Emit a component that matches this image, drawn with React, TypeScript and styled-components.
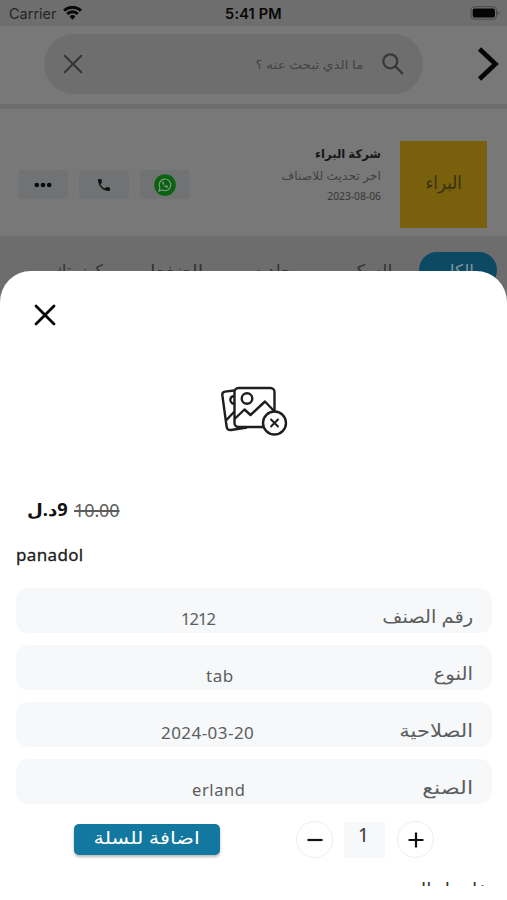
import React from 'react';
import styled, { createGlobalStyle } from 'styled-components';

const Global = createGlobalStyle`
  * { box-sizing: border-box; }
  body { margin: 0; background: #fff; }
`;

const Screen = styled.div`
  position: relative;
  width: 507px;
  height: 900px;
  overflow: hidden;
  background: #707070;
  font-family: 'Noto Sans', 'DejaVu Sans', sans-serif;
`;

const Label = styled.span<{ $size: number; $color?: string; $weight?: number; $stretch?: number; $origin?: string; $track?: number }>`
  display: inline-block;
  white-space: nowrap;
  font-size: ${p => p.$size}px;
  font-weight: ${p => p.$weight ?? 400};
  color: ${p => p.$color ?? '#5c5d5f'};
  letter-spacing: ${p => p.$track ?? 0}px;
  transform: scaleX(${p => p.$stretch ?? 1});
  transform-origin: ${p => p.$origin ?? 'right'} center;
`;

const StatusBar = styled.header`
  display: grid;
  grid-template-columns: 1fr auto 1fr;
  align-items: center;
  height: 26px;
  padding: 2px 7px 0 9px;
  background: #6e6e6e;
  color: #060606;
  font: 600 14.5px/24px Inter, sans-serif;
`;

const Time = styled.span`
  margin-left: -2px;
  letter-spacing: 0.2px;
`;

const Carrier = styled.div`
  display: flex;
  align-items: center;
  gap: 6px;
  font-weight: 400;
  font-size: 14.5px;
  color: #252525;
`;

const Battery = styled.svg`
  justify-self: end;
  margin-top: -2px;
`;

const SearchHeader = styled.div`
  display: flex;
  align-items: center;
  height: 78px;
  padding: 0 8px 2px 44px;
  justify-content: space-between;
  background: #787878;
`;

const SearchBox = styled.div`
  display: flex;
  align-items: center;
  width: 379px;
  height: 60px;
  padding: 0 18px;
  border-radius: 30px;
  background: #6e6e6e;
`;

const SearchHint = styled.div`
  flex: 1;
  display: flex;
  justify-content: flex-end;
  padding-right: 18px;
`;

const Company = styled.section`
  display: flex;
  align-items: flex-start;
  height: 132px;
  padding: 32px 20px 0 18px;
  border-top: 5px solid #6c6c6c;
  background: #787878;
`;

const Contacts = styled.div`
  display: flex;
  gap: 11px;
  padding-top: 29px;
`;

const ContactButton = styled.button`
  display: grid;
  place-items: center;
  width: 50px;
  height: 29px;
  padding: 0;
  border: 0;
  border-radius: 5px;
  background: #707274;
`;

const CompanyInfo = styled.div`
  flex: 1;
  display: flex;
  flex-direction: column;
  align-items: flex-end;
  padding: 2px 19px 0 0;
  line-height: 21.5px;
`;

const Logo = styled.div`
  display: grid;
  place-items: center;
  width: 87px;
  height: 87px;
  padding-bottom: 6px;
  background: #79600d;
`;

const Tabs = styled.nav`
  display: flex;
  direction: rtl;
  height: 60px;
  padding: 16px 10px 0;
  background: #6d6d6d;
`;

const Tab = styled.div<{ $width: number; $active?: boolean }>`
  display: flex;
  justify-content: center;
  width: ${p => p.$width}px;
  height: 36px;
  border-radius: 18px;
  line-height: 36px;
  background: ${p => (p.$active ? '#0b4a62' : 'transparent')};
`;

const Sheet = styled.main`
  position: absolute;
  inset: 271px 0 0;
  padding: 31px 15px 0 16px;
  border-radius: 31px 31px 0 0;
  background: #fff;
`;

const CloseButton = styled.button`
  display: block;
  width: 24px;
  height: 24px;
  margin: 1px 0 0 17px;
  padding: 0;
  border: 0;
  background: none;
`;

const Placeholder = styled.div`
  height: 54px;
  margin: 59px 0 0 204px;
`;

const Price = styled.div`
  display: flex;
  gap: 6px;
  height: 28px;
  margin: 56px 0 0 11px;
  line-height: 28px;
`;

const Amount = styled.div`
  display: flex;
  width: 41px;
`;

const OldPrice = styled.del`
  font-size: 18px;
  letter-spacing: -0.1px;
  color: #5d5d5d;
  text-decoration-thickness: 1.5px;
`;

const Product = styled.h1`
  margin: 17px 0 0;
  font-size: 17px;
  font-weight: 400;
  line-height: 28px;
  letter-spacing: 0.35px;
  color: #202020;
  -webkit-text-stroke: 0.3px #202020;
`;

const Details = styled.div`
  display: grid;
  gap: 12px;
  margin-top: 19px;
`;

const Detail = styled.div<{ $offset: number }>`
  display: flex;
  justify-content: space-between;
  height: 45px;
  padding: 0 19px 0 ${p => p.$offset}px;
  border-radius: 12px;
  background: #f6f8f9;
`;

const Value = styled.div`padding-top: 17px; line-height: 28px;`;
const Name = styled.div`padding-top: 14px; line-height: 28px;`;

const Actions = styled.div`
  display: flex;
  align-items: flex-start;
  height: 71px;
  padding: 17px 58px 0;
`;

const AddButton = styled.button`
  display: flex;
  justify-content: center;
  width: 146px;
  height: 31px;
  margin: 3px 76px 0 0;
  padding: 0;
  border: 0;
  border-radius: 5px;
  background: #12789f;
  box-shadow: 0 2px 3px #0004;
  font-family: inherit;
  line-height: 26px;
`;

const RoundButton = styled.button`
  display: grid;
  place-items: center;
  width: 37px;
  height: 37px;
  padding: 0;
  border: 1px solid #eee;
  border-radius: 50%;
  background: #fff;
`;

const Quantity = styled.div`
  width: 41px;
  height: 36px;
  margin: 1px 12px 0 11px;
  background: #f6f8f9;
  text-align: center;
  font-size: 19px;
  line-height: 26px;
  color: #333;
  text-indent: -2px;
`;

const ClippedTitle = styled.div`
  display: flex;
  justify-content: flex-end;
  height: 11px;
  overflow: hidden;
  line-height: 28px;
`;

const Cross = ({ size, color, width }: { size: number; color: string; width: number }) => (
  <svg width={size} height={size} viewBox="0 0 24 24" fill="none" stroke={color} strokeWidth={width} strokeLinecap="round">
    <path d="M3 3l18 18M21 3L3 21" />
  </svg>
);

const details = [
  { name: 'رقم الصنف', value: '1212', offset: 165, stretch: 1.08, size: 16.5, track: -0.9 },
  { name: 'النوع', value: 'tab', offset: 190, stretch: 1.1, size: 17, track: 0.6 },
  { name: 'الصلاحية', value: '2024-03-20', offset: 145, stretch: 1.17, size: 17, track: 0.45 },
  { name: 'الصنع', value: 'erland', offset: 176, stretch: 1.24, size: 16.5, track: 0.6 },
];

const tabs = [
  { name: 'الكل', width: 78, active: true, stretch: 1.05 },
  { name: 'السكر', width: 98, stretch: 1.1 },
  { name: 'جلديه', width: 98, stretch: 1.05 },
  { name: 'الضغط', width: 96, stretch: 1.22 },
  { name: 'كوزمتك', width: 97, stretch: 0.98 },
];

export default function App() {
  return (
    <Screen>
      <Global />
      <StatusBar>
        <Carrier>
          Carrier
          <svg width="19" height="16" viewBox="0 0 18 15" fill="none" stroke="#080808" strokeWidth="2.7">
            <path d="M1 4.3C5.3 0 12.7 0 17 4.3M4 7.500c2.800-2.800 7.200-2.800 10 0" />
            <path d="M6.200 9.900a4 4 0 0 1 5.600 0L9 13z" fill="#080808" stroke="none" />
          </svg>
        </Carrier>
        <Time>5:41 PM</Time>
        <Battery width="30" height="14" viewBox="0 0 30 14">
          <rect x="1" y=".7" width="25.500" height="12.500" rx="3.500" fill="none" stroke="#494949" />
          <rect x="2.700" y="2.400" width="22.200" height="9.200" rx="2" fill="#050505" />
          <path d="M27.500 4.500q3 2.500 0 5z" fill="#494949" />
        </Battery>
      </StatusBar>
      <SearchHeader>
        <SearchBox>
          <Cross size={22} color="#353535" width={2.3} />
          <SearchHint><Label $size={12} $stretch={1.13} $color="#424242">ما الذي تبحث عنه ؟</Label></SearchHint>
          <svg width="24" height="24" viewBox="0 0 24 24" fill="none" stroke="#393939" strokeWidth="2.300">
            <circle cx="9.300" cy="9.300" r="7" /><path d="M14.400 14.400l7.500 7.500" />
          </svg>
        </SearchBox>
        <svg width="22" height="34" viewBox="0 0 22 34" fill="none" stroke="#050505" strokeWidth="4.600">
          <path d="M2.500 2L18.500 17 2.500 32" />
        </svg>
      </SearchHeader>
      <Company>
        <Contacts>
          <ContactButton aria-label="More">
            <svg width="18" height="6" viewBox="0 0 18 6" fill="#080808"><circle cx="2.800" cy="3" r="2.300" /><circle cx="9" cy="3" r="2.300" /><circle cx="15.200" cy="3" r="2.300" /></svg>
          </ContactButton>
          <ContactButton aria-label="Call">
            <svg width="16" height="16" viewBox="0 0 24 24" fill="#111"><path d="M6.600 10.800c1.400 2.800 3.800 5.100 6.600 6.600l2.200-2.200c.3-.3.7-.4 1-.2 1.100.4 2.300.6 3.600.6.6 0 1 .4 1 1V20c0 .6-.4 1-1 1C10.600 21 3 13.400 3 4c0-.6.4-1 1-1h3.500c.6 0 1 .4 1 1 0 1.300.2 2.500.6 3.600.1.300 0 .700-.3 1z" /></svg>
          </ContactButton>
          <ContactButton aria-label="WhatsApp">
            <svg width="22" height="22" viewBox="0 0 22 22">
              <circle cx="11" cy="11" r="10.800" fill="#096311" />
              <path d="M5 17l.9-3.300A5.800 5.800 0 1 1 8.300 16z" fill="none" stroke="#829582" strokeWidth="1.200" />
              <path d="M8.700 7.600c-1 .8-.7 2.200.9 4s3.200 2.700 4.300 1.500l.2-1-1.700-.8-.9.800c-1-.4-1.700-1.100-2-2l.7-.8-.7-1.700z" fill="#829582" />
            </svg>
          </ContactButton>
        </Contacts>
        <CompanyInfo>
          <Label $size={12} $weight={700} $stretch={0.97} $color="#171717">شركة البراء</Label>
          <Label $size={11.5} $stretch={1.07} $color="#424242">اخر تحديث للاصناف</Label>
          <Label $size={10.3} $color="#373737">2023-08-06</Label>
        </CompanyInfo>
        <Logo><Label $size={18} $stretch={0.93} $color="#3b300d" $origin="center">البراء</Label></Logo>
      </Company>
      <Tabs>
        {tabs.map(t => (
          <Tab key={t.name} $width={t.width} $active={t.active}>
            <Label $size={16} $stretch={t.stretch} $color={t.active ? '#83969e' : '#333'} $origin="center">{t.name}</Label>
          </Tab>
        ))}
      </Tabs>
      <Sheet>
        <CloseButton aria-label="Close"><Cross size={24} color="#080808" width={2.8} /></CloseButton>
        <Placeholder>
          <svg width="70" height="54" viewBox="0 0 70 54" fill="none" stroke="#1e1e1e" strokeWidth="2.400" strokeLinejoin="round">
            <path d="M14 4.500L5 5.600Q2 6 2.300 9l4.300 31.500q.5 4 4.400 3.500l16-2.500M14 10q-4.500 1-3.500 5 .7 2.300 3.500 3M5.500 35l9-9.500" />
            <rect x="14.500" y="2" width="40" height="39" rx="4" />
            <circle cx="27" cy="12.500" r="5.300" />
            <path d="M14.500 33l10-9.500 6 5.500L45 15.500l9.500 10" />
            <circle cx="54.500" cy="37" r="11.500" fill="#fff" />
            <path d="M50.500 33l8 8m0-8l-8 8" strokeWidth="2" />
          </svg>
        </Placeholder>
        <Price>
          <Amount>
            <Label $size={17} $stretch={1.07} $origin="left" $weight={700} $color="#111" dir="rtl">9د.ل</Label>
          </Amount>
          <OldPrice>10.00</OldPrice>
        </Price>
        <Product>panadol</Product>
        <Details>
          {details.map(d => (
            <Detail key={d.name} $offset={d.offset}>
              <Value><Label $size={d.size} $track={d.track} $origin="left">{d.value}</Label></Value>
              <Name><Label $size={18} $stretch={d.stretch}>{d.name}</Label></Name>
            </Detail>
          ))}
        </Details>
        <Actions>
          <AddButton><Label $size={17.5} $stretch={1.19} $color="#fff" $origin="center">اضافة للسلة</Label></AddButton>
          <RoundButton aria-label="Decrease"><svg width="16" height="16" stroke="#111" strokeWidth="2.200"><path d="M0.500 8h15" /></svg></RoundButton>
          <Quantity>1</Quantity>
          <RoundButton aria-label="Increase"><svg width="16" height="16" stroke="#111" strokeWidth="2.200"><path d="M0.500 8h15M8 .5v15" /></svg></RoundButton>
        </Actions>
        <ClippedTitle><Label $size={17} $stretch={1.1} $color="#333">تفاصيل المنتج</Label></ClippedTitle>
      </Sheet>
    </Screen>
  );
}
